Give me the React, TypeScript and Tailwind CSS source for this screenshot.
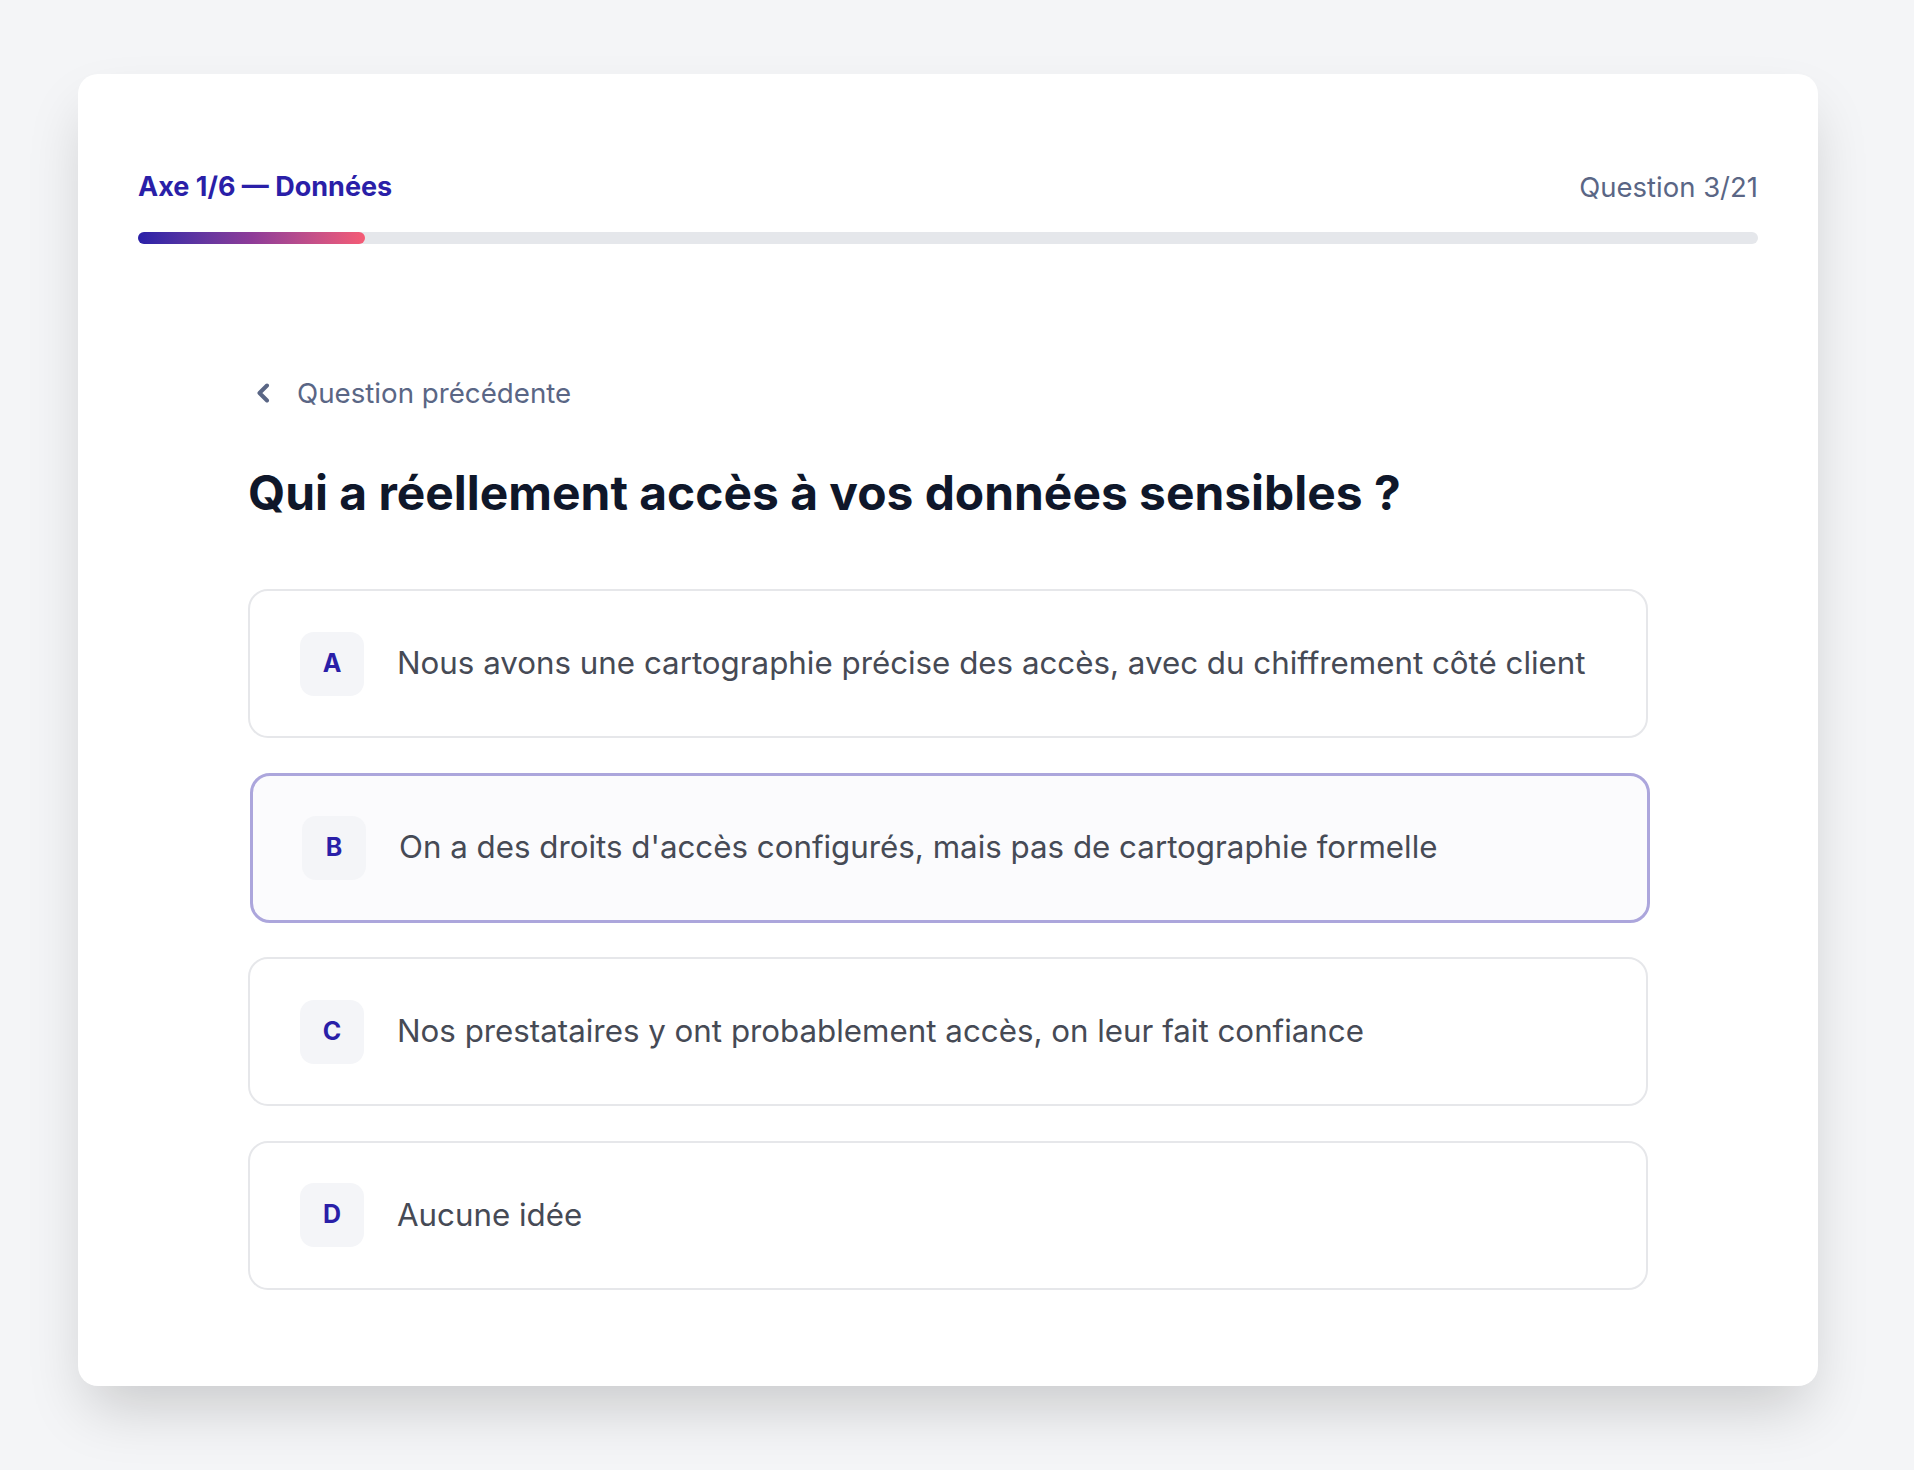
const OPTIONS = [
  { key: "A", label: "Nous avons une cartographie précise des accès, avec du chiffrement côté client" },
  { key: "B", label: "On a des droits d'accès configurés, mais pas de cartographie formelle" },
  { key: "C", label: "Nos prestataires y ont probablement accès, on leur fait confiance" },
  { key: "D", label: "Aucune idée" },
];

function BackChevron() {
  return (
    <svg width="16" height="20" viewBox="0 0 16 20" fill="none" className="shrink-0">
      <path d="M12 2.5 L4.5 10 L12 17.5" stroke="currentColor" strokeWidth="4" strokeLinecap="round" strokeLinejoin="round" />
    </svg>
  );
}

export default function App() {
  const selected = "B";
  return (
    <div className="min-h-[1470px] bg-[#f4f5f7] pl-[78px] pt-[74px] font-['Inter',sans-serif]">
      <div className="w-[1740px] rounded-[20px] bg-white px-[60px] pb-[96px] pt-[95px] shadow-[0_30px_60px_-10px_rgba(0,0,0,0.18)]">
        <div className="flex items-center justify-between leading-[36px]">
          <span className="text-[27px] font-bold text-[#2a1fa8]">Axe 1/6 — Données</span>
          <span className="text-[27.5px] text-[#5a6685]">Question 3/21</span>
        </div>
        <div className="mt-[27px] h-[12px] w-full rounded-full bg-[#e5e7eb]">
          <div className="h-full w-[227px] rounded-full bg-gradient-to-r from-[#2a1fa8] via-[#8e3b98] to-[#f55b74]" />
        </div>

        <div className="mx-auto mt-[131px] max-w-[1400px]">
          <button className="ml-[7px] flex items-center gap-[26px] text-[27.7px] leading-[36px] text-[#5a6685]">
            <BackChevron />
            Question précédente
          </button>
          <h1 className="mt-[54px] whitespace-nowrap text-[47.9px] font-bold leading-[56px] text-[#0f172a]">
            Qui a réellement accès à vos données sensibles ?
          </h1>
          <div className="mt-[68px] flex flex-col gap-[34.5px]">
            {OPTIONS.map((o) => {
              const active = o.key === selected;
              return (
                <div
                  key={o.key}
                  className={
                    active
                      ? "flex h-[150px] translate-x-[2px] items-center gap-[33px] rounded-[20px] border-[3px] border-[#aca6dc] bg-[#fbfbfd] px-[49px]"
                      : "flex h-[149px] items-center gap-[33px] rounded-[20px] border-2 border-[#e6e7ea] bg-white px-[50px]"
                  }
                >
                  <div className="flex h-[64px] w-[64px] shrink-0 items-center justify-center rounded-[14px] bg-[#f4f5f8] text-[25px] font-bold text-[#2a1fa8]">
                    {o.key}
                  </div>
                  <span className="whitespace-nowrap text-[31.3px] text-[#464a55]">{o.label}</span>
                </div>
              );
            })}
          </div>
        </div>
      </div>
    </div>
  );
}
